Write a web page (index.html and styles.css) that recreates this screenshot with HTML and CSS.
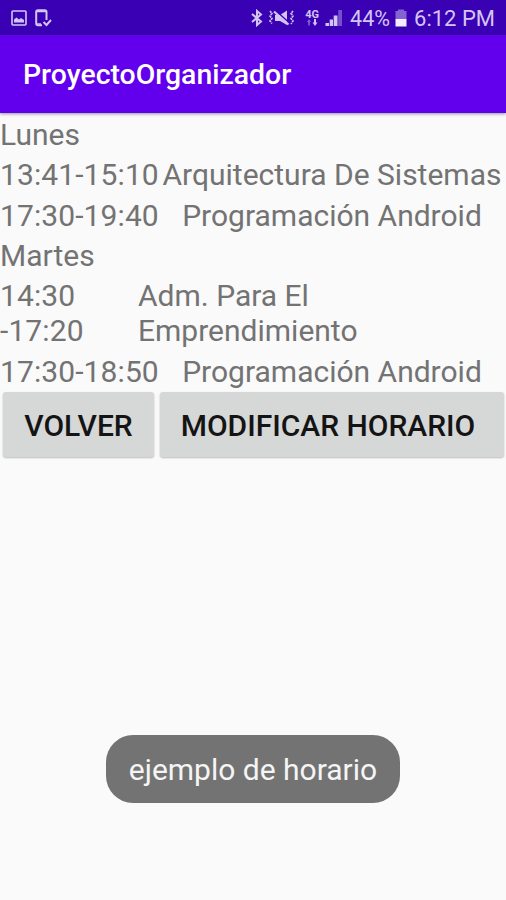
FILE: index.html
```html
<!DOCTYPE html>
<html lang="es">
<head>
<meta charset="UTF-8">
<meta name="viewport" content="width=device-width, initial-scale=1.0">
<title>ProyectoOrganizador</title>
<link rel="stylesheet" href="styles.css">
</head>
<body>
<div class="status-bar">
  <svg class="icon-image" width="16" height="16" viewBox="0 0 16 16">
    <rect x="1" y="1" width="14" height="14" rx="1" fill="none" stroke="currentColor" stroke-width="1.6"/>
    <path d="M3 12.5V9.5L5.5 7.5L8 9.5L10 8L13 10V12.5Z" fill="currentColor"/>
  </svg>
  <svg class="icon-phone" width="17" height="19" viewBox="0 0 17 19">
    <path d="M11.5 11V3Q11.5 1.2 9.8 1.2H3Q1.2 1.2 1.2 3V14.5Q1.2 16.3 3 16.3H7" fill="none" stroke="currentColor" stroke-width="2"/>
    <path d="M2 2.5H11M2 15H6" fill="none" stroke="currentColor" stroke-width="1.4"/>
    <path d="M8.5 13L11.5 16L16 11" fill="none" stroke="currentColor" stroke-width="2"/>
  </svg>
  <span class="spacer"></span>
  <svg class="icon-bluetooth" width="12" height="18" viewBox="0 0 12 18">
    <path d="M1 5L10 12.5L6 16V2L10 5.5L1 13" fill="none" stroke="currentColor" stroke-width="2"/>
  </svg>
  <svg class="icon-mute" width="27" height="18" viewBox="0 0 27 18">
    <path d="M2 2L4 4.5L2 7L4 9.5L2 12L4 14.5M25 2L23 4.5L25 7L23 9.5L25 12L23 15" fill="none" stroke="currentColor" stroke-width="1.6" stroke-dasharray="2.2 0.8"/>
    <path d="M7 6H12L19 1.5V16L12 12H7Z" fill="currentColor"/>
    <path d="M7.5 1.5L22 14.5" stroke="#3900b4" stroke-width="1.6"/>
    <path d="M6 2.5L20.5 15.5" stroke="currentColor" stroke-width="2.2"/>
  </svg>
  <div class="network">
    <span>4G</span>
    <svg width="12" height="7" viewBox="0 0 12 7">
      <path d="M3 0L5 3H3.8V6.5H2.2V3H1Z" fill="currentColor" opacity="0.5"/>
      <path d="M9 7L6.5 3.5H8V0H10V3.5H11.5Z" fill="currentColor"/>
    </svg>
  </div>
  <svg class="icon-signal" width="18" height="18" viewBox="0 0 18 18">
    <path d="M0.5 14H4V17H0.5ZM4.7 10.5H8V17H4.7ZM8.7 6.5H12.5V17H8.7Z" fill="currentColor"/>
    <path d="M13.2 1H17V17H13.2Z" fill="currentColor" opacity="0.4"/>
  </svg>
  <span class="percent">44%</span>
  <svg class="icon-battery" width="12" height="18" viewBox="0 0 12 18">
    <path d="M3 0.5H9V2H11.5V10H0.5V2H3Z" fill="currentColor" opacity="0.5"/>
    <path d="M0.5 10H11.5V17.5H0.5Z" fill="#f3edff"/>
  </svg>
  <span class="clock">6:12 PM</span>
</div>

<div class="toolbar">ProyectoOrganizador</div>

<div class="schedule">
  <div class="day">Lunes</div>
  <div class="row">
    <span class="time">13:41-15:10</span>
    <span class="subject">Arquitectura De Sistemas</span>
  </div>
  <div class="row">
    <span class="time">17:30-19:40</span>
    <span class="subject">Programación Android</span>
  </div>
  <div class="day">Martes</div>
  <div class="row row-wrap">
    <span class="time">14:30<br>-17:20</span>
    <span class="subject">Adm. Para El<br>Emprendimiento</span>
  </div>
  <div class="row">
    <span class="time">17:30-18:50</span>
    <span class="subject">Programación Android</span>
  </div>
</div>

<div class="buttons">
  <button class="button button-back">VOLVER</button>
  <button class="button button-edit">MODIFICAR HORARIO</button>
</div>

<div class="toast">ejemplo de horario</div>
</body>
</html>
```
FILE: styles.css
```css
body {
  font-family: Roboto, sans-serif;
  margin: 0;
  height: 900px;
  display: flex;
  flex-direction: column;
  background-color: #fafafa;
  color: #737373;
  overflow: hidden;
}

/* Status bar */
.status-bar {
  display: flex;
  align-items: center;
  box-sizing: border-box;
  flex: none;
  height: 35px;
  padding: 1px 11px 0 11px;
  background-color: #3900b4;
  color: #d3c5f2;
  font-size: 22px;
  white-space: nowrap;
}

.status-bar svg {
  flex: none;
}

.icon-phone {
  margin-left: 8px;
}

.spacer {
  flex: 1;
}

.icon-mute {
  margin-left: 5px;
}

.network {
  display: flex;
  flex-direction: column;
  align-items: center;
  width: 16px;
  margin-left: 9px;
  font-size: 11px;
  font-weight: 700;
  line-height: 9px;
}

.icon-signal {
  margin-left: 5px;
}

.percent {
  margin-left: 7px;
  font-size: 21.5px;
}

.icon-battery {
  margin-left: 5px;
}

.clock {
  margin-left: 7px;
}

/* App bar */
.toolbar {
  flex: none;
  height: 78px;
  padding-left: 23px;
  background-color: #6200ee;
  color: #ffffff;
  font-size: 28.4px;
  font-weight: 500;
  line-height: 79px;
  box-shadow: 0 1px 3px rgba(0, 0, 0, 0.4);
}

/* Schedule table */
.schedule {
  padding-bottom: 2px;
  font-size: 30px;
  line-height: 35.3px;
}

.day,
.row {
  padding: 4px 0 1px;
}

.row {
  display: flex;
}

.time {
  width: 158px;
  letter-spacing: 0.1px;
  white-space: nowrap;
}

.subject {
  flex: 1;
  text-align: center;
  white-space: nowrap;
}

.row-wrap .time {
  width: 138px;
}

.row-wrap .subject {
  text-align: left;
}

/* Buttons */
.buttons {
  display: flex;
  gap: 6px;
  padding: 0 2px 0 3px;
}

.button {
  height: 65px;
  padding: 1px 0 0;
  border: none;
  border-radius: 3px;
  background-color: #d6d7d7;
  color: #141414;
  font-family: inherit;
  font-size: 30px;
  font-weight: 500;
  box-shadow: 0 1px 2px rgba(0, 0, 0, 0.25);
}

.button-back {
  width: 151px;
}

.button-edit {
  flex: 1;
  padding-right: 8px;
}

/* Toast */
.toast {
  align-self: center;
  box-sizing: border-box;
  width: 294px;
  height: 68px;
  margin-top: auto;
  margin-bottom: 97px;
  border-radius: 27px;
  background-color: #737373;
  color: #f5f5f5;
  font-size: 30px;
  line-height: 70px;
  text-align: center;
}
```
